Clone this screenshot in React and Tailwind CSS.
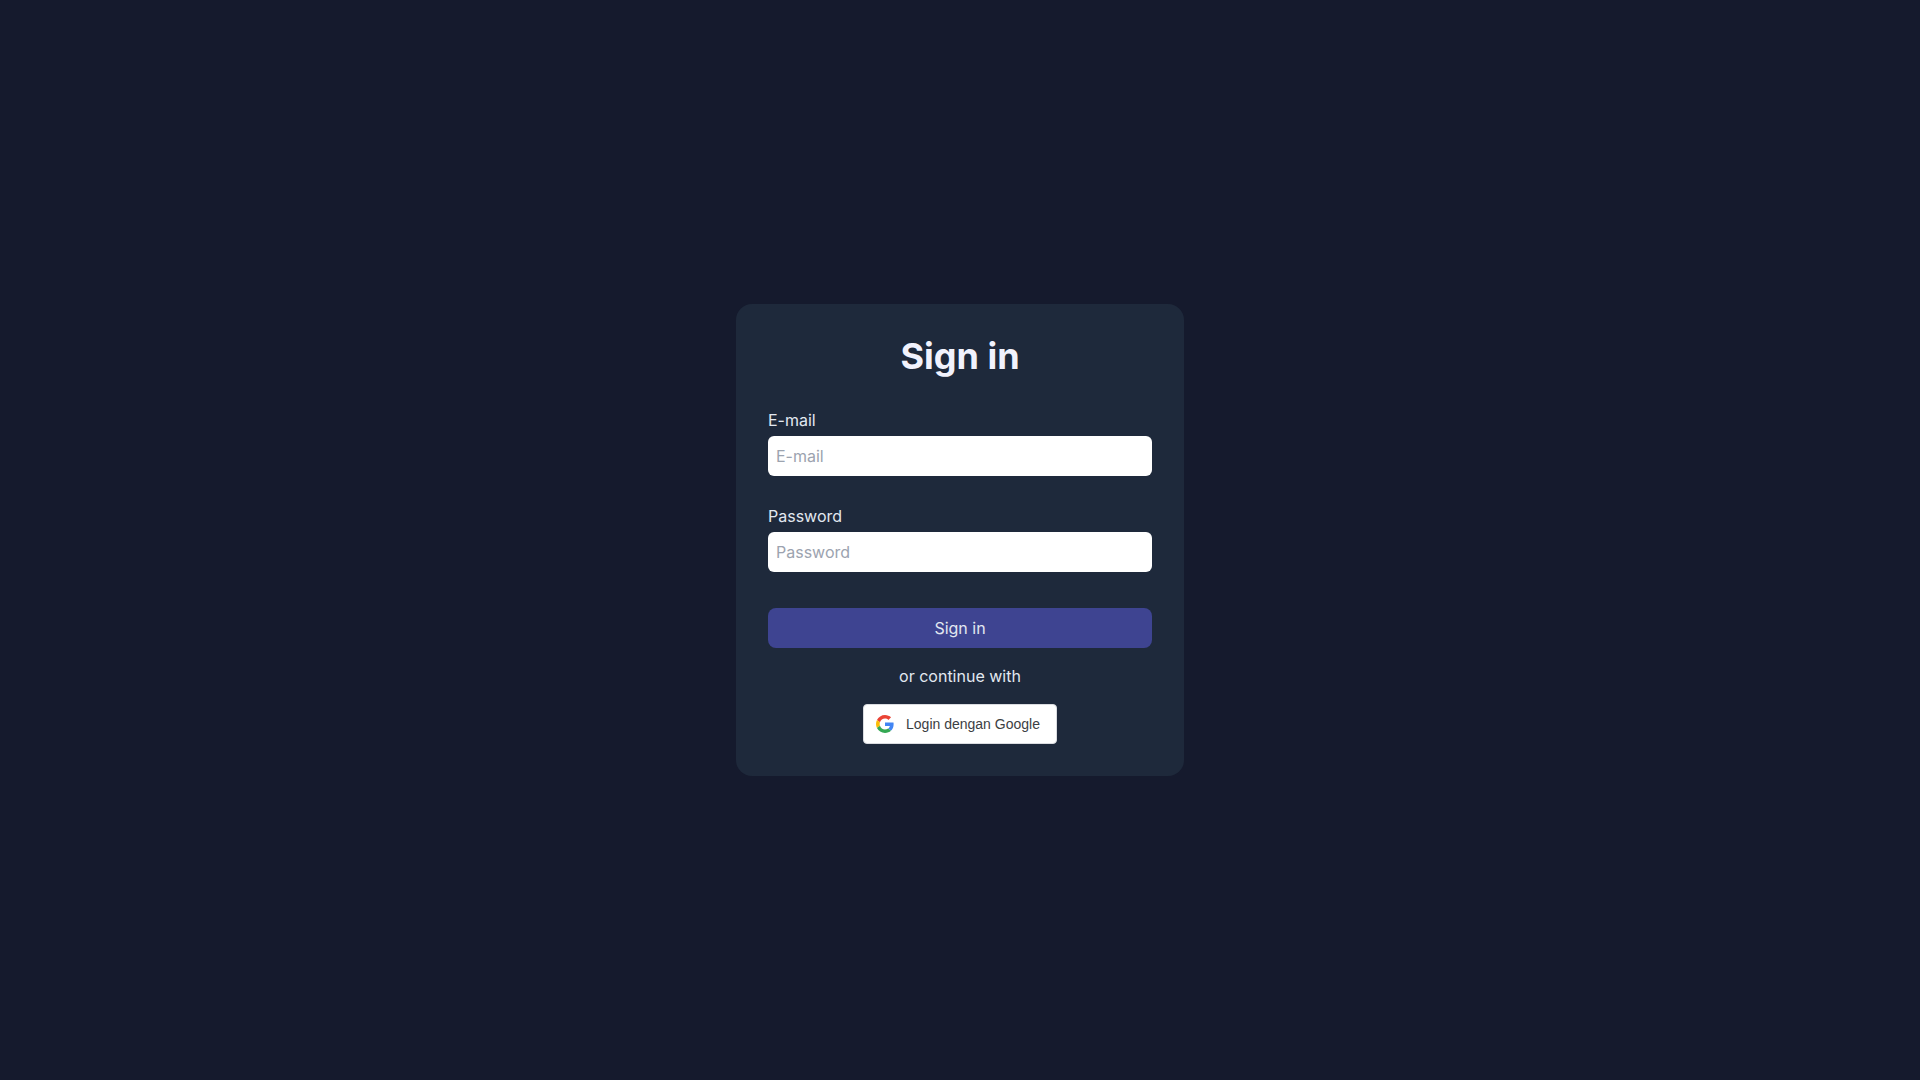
import { useState } from "react";

function GoogleIcon() {
  return (
    <svg viewBox="0 0 48 48" className="size-[18px] shrink-0" aria-hidden="true">
      <path
        fill="#EA4335"
        d="M24 9.5c3.54 0 6.71 1.22 9.21 3.6l6.85-6.85C35.9 2.38 30.47 0 24 0 14.62 0 6.51 5.38 2.56 13.22l7.98 6.19C12.43 13.72 17.74 9.5 24 9.5z"
      />
      <path
        fill="#4285F4"
        d="M46.98 24.55c0-1.57-.15-3.09-.38-4.55H24v9.02h12.94c-.58 2.96-2.26 5.48-4.78 7.18l7.73 6c4.51-4.18 7.09-10.36 7.09-17.65z"
      />
      <path
        fill="#FBBC05"
        d="M10.53 28.59c-.48-1.45-.76-2.99-.76-4.59s.27-3.14.76-4.59l-7.98-6.19C.92 16.46 0 20.12 0 24c0 3.88.92 7.54 2.56 10.78l7.97-6.19z"
      />
      <path
        fill="#34A853"
        d="M24 48c6.48 0 11.93-2.13 15.89-5.81l-7.73-6c-2.15 1.45-4.92 2.3-8.16 2.3-6.26 0-11.57-4.22-13.47-9.91l-7.98 6.19C6.51 42.62 14.62 48 24 48z"
      />
    </svg>
  );
}

function Field({ id, label, ...props }) {
  return (
    <div className="flex flex-col gap-1">
      <label htmlFor={id}>{label}</label>
      <input
        id={id}
        placeholder={label}
        className="h-10 w-full rounded-md bg-white px-2 text-gray-900 outline-none placeholder:text-[#9ca3af] focus:ring-2 focus:ring-[#3e4491]"
        {...props}
      />
    </div>
  );
}

export default function App() {
  const [email, setEmail] = useState("");
  const [password, setPassword] = useState("");

  return (
    <main className="flex min-h-screen items-center justify-center bg-[#151a2d] font-['Inter',sans-serif] text-base text-[#e2e8f0]">
      <div className="w-full max-w-md rounded-2xl bg-[#1e293b] p-8">
        <h1 className="text-center text-4xl font-bold text-[#f1f2fd]">Sign in</h1>

        <form className="mt-8" onSubmit={(e) => e.preventDefault()}>
          <div className="flex flex-col gap-7">
            <Field
              id="email"
              label="E-mail"
              type="email"
              value={email}
              onChange={(e) => setEmail(e.target.value)}
            />
            <Field
              id="password"
              label="Password"
              type="password"
              value={password}
              onChange={(e) => setPassword(e.target.value)}
            />
          </div>
          <button
            type="submit"
            className="mt-9 h-10 w-full rounded-lg bg-[#3e4491] hover:bg-[#4a51a8]"
          >
            Sign in
          </button>
        </form>

        <div className="mt-4 flex flex-col items-center gap-4">
          <p>or continue with</p>
          <button
            type="button"
            className="flex h-10 min-w-[194px] items-center gap-2 rounded border border-[#dadce0] bg-white px-3 font-['Liberation_Sans',Arial,sans-serif] text-sm text-[#3c4043] hover:bg-gray-50"
          >
            <GoogleIcon />
            <span className="grow text-center">Login dengan Google</span>
          </button>
        </div>
      </div>
    </main>
  );
}
